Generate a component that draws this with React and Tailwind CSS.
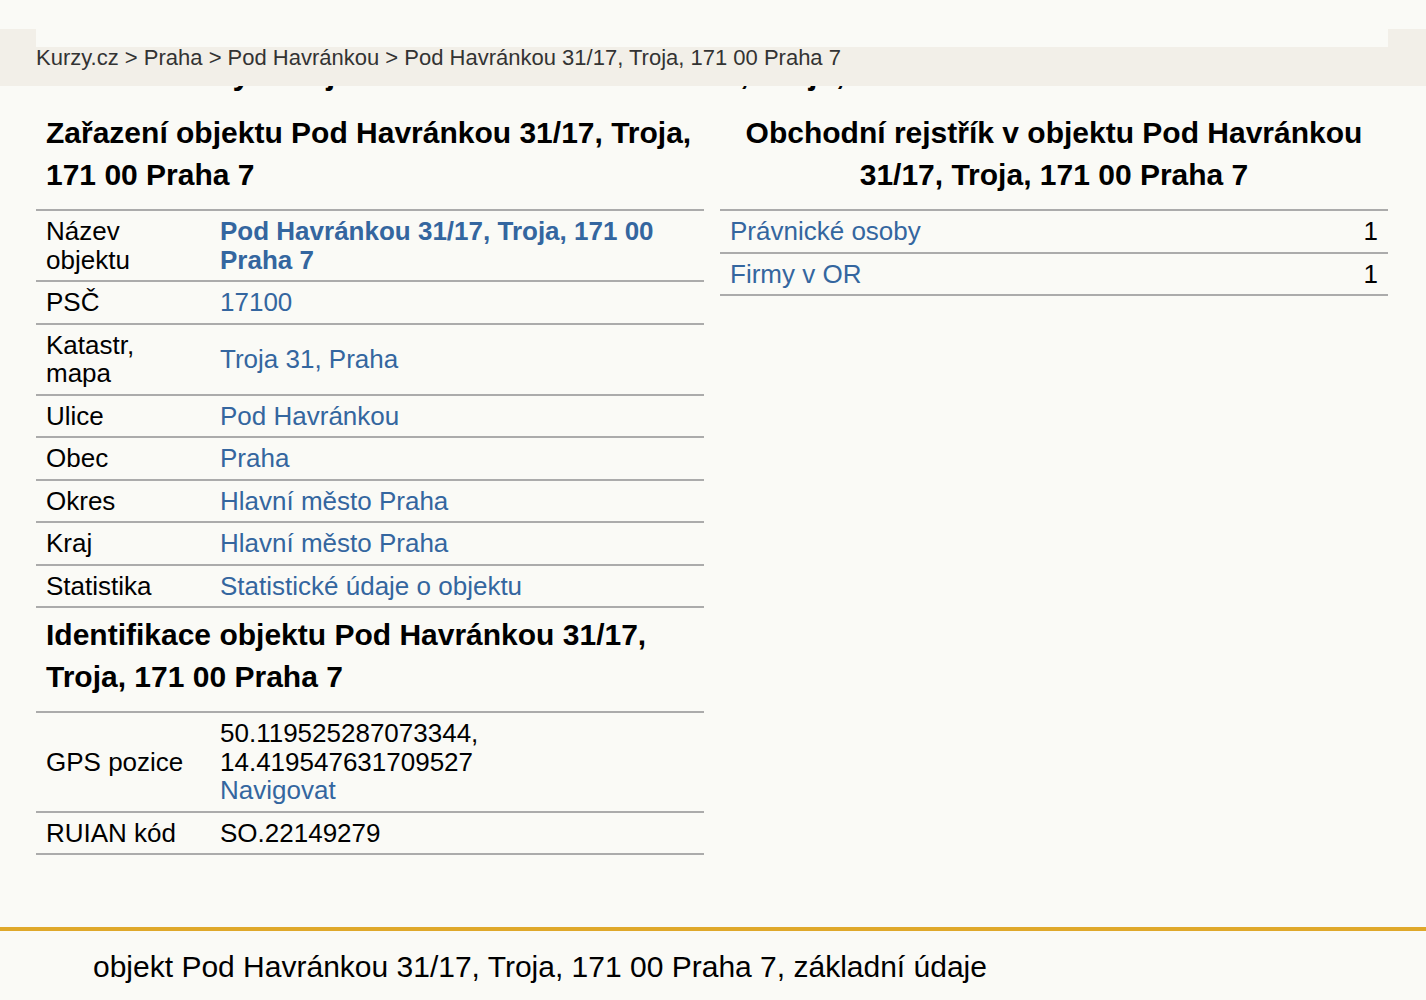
import React from 'react';

const LINK = 'text-[#34669f]';

const zarazeni = [
  { label: 'Název objektu', value: 'Pod Havránkou 31/17, Troja, 171 00 Praha 7', bold: true },
  { label: 'PSČ', value: '17100' },
  { label: 'Katastr, mapa', value: 'Troja 31, Praha' },
  { label: 'Ulice', value: 'Pod Havránkou' },
  { label: 'Obec', value: 'Praha' },
  { label: 'Okres', value: 'Hlavní město Praha' },
  { label: 'Kraj', value: 'Hlavní město Praha' },
  { label: 'Statistika', value: 'Statistické údaje o objektu' },
];

const rejstrik = [
  { label: 'Právnické osoby', count: 1 },
  { label: 'Firmy v OR', count: 1 },
];

const Heading = ({ children, center = false }) => (
  <h2 className={`px-[10px] pt-[6px] pb-[13px] text-[30px] leading-[42px] font-bold ${center ? 'text-center' : ''}`}>
    {children}
  </h2>
);

const Row = ({ label, children }) => (
  <tr className="border-b-2 border-[#ababab]">
    <td className="w-[174px] px-[10px] py-[6px] align-middle">{label}</td>
    <td className="px-[10px] py-[6px] align-middle">{children}</td>
  </tr>
);

export default function App() {
  return (
    <div className="relative min-h-screen bg-[#fafaf6] text-black font-['Liberation_Sans',Arial,sans-serif]">
      <div className="pl-[36px] pr-[38px]">
        {/* page title, mostly hidden under the sticky breadcrumb bar */}
        <h1 className="pt-[53px] pl-[126px] text-[32.5px] leading-[40px] font-bold whitespace-nowrap">
          Firmy v objektu Pod Havránkou 31/17, Troja, 171 00 Praha 7
        </h1>

        <div className="mt-[13px] grid grid-cols-2 gap-4 items-start">
          <div>
            <Heading>Zařazení objektu Pod Havránkou 31/17, Troja, 171 00 Praha 7</Heading>
            <table className="w-full border-collapse border-t-2 border-[#ababab] text-[26px] leading-[28.5px]">
              <tbody>
                {zarazeni.map((r) => (
                  <Row key={r.label} label={r.label}>
                    <a className={`${LINK} ${r.bold ? 'font-bold' : ''}`}>{r.value}</a>
                  </Row>
                ))}
              </tbody>
            </table>

            <Heading>Identifikace objektu Pod Havránkou 31/17, Troja, 171 00 Praha 7</Heading>
            <table className="w-full border-collapse border-t-2 border-[#ababab] text-[26px] leading-[28.5px]">
              <tbody>
                <Row label="GPS pozice">
                  50.119525287073344,
                  <br />
                  14.419547631709527
                  <br />
                  <a className={LINK}>Navigovat</a>
                </Row>
                <Row label="RUIAN kód">SO.22149279</Row>
              </tbody>
            </table>
          </div>

          <div>
            <Heading center>Obchodní rejstřík v objektu Pod Havránkou 31/17, Troja, 171 00 Praha 7</Heading>
            <table className="w-full border-collapse border-t-2 border-[#ababab] text-[26px] leading-[28.5px]">
              <tbody>
                {rejstrik.map((r) => (
                  <tr key={r.label} className="border-b-2 border-[#ababab]">
                    <td className="px-[10px] py-[6px]">
                      <a className={LINK}>{r.label}</a>
                    </td>
                    <td className="px-[10px] py-[6px] text-right">{r.count}</td>
                  </tr>
                ))}
              </tbody>
            </table>
          </div>
        </div>
      </div>

      <footer className="mt-[72px] border-t-4 border-[#dfa82a] pl-[93px] pt-[18px] pb-6">
        <p className="text-[30px] leading-[36px]">
          objekt Pod Havránkou 31/17, Troja, 171 00 Praha 7, základní údaje
        </p>
      </footer>

      <div className="absolute left-0 right-0 top-[29px] h-[57px] bg-[#f2efe8]">
        <div className="ml-[36px] mr-[38px] h-[18px] bg-[#fafaf6]" />
        <div className="pl-[36px] text-[22px] leading-[22px] text-[#333333] whitespace-nowrap">
          <a>Kurzy.cz</a> &gt; <a>Praha</a> &gt; <a>Pod Havránkou</a> &gt; <a>Pod Havránkou 31/17, Troja, 171 00 Praha 7</a>
        </div>
      </div>
    </div>
  );
}
